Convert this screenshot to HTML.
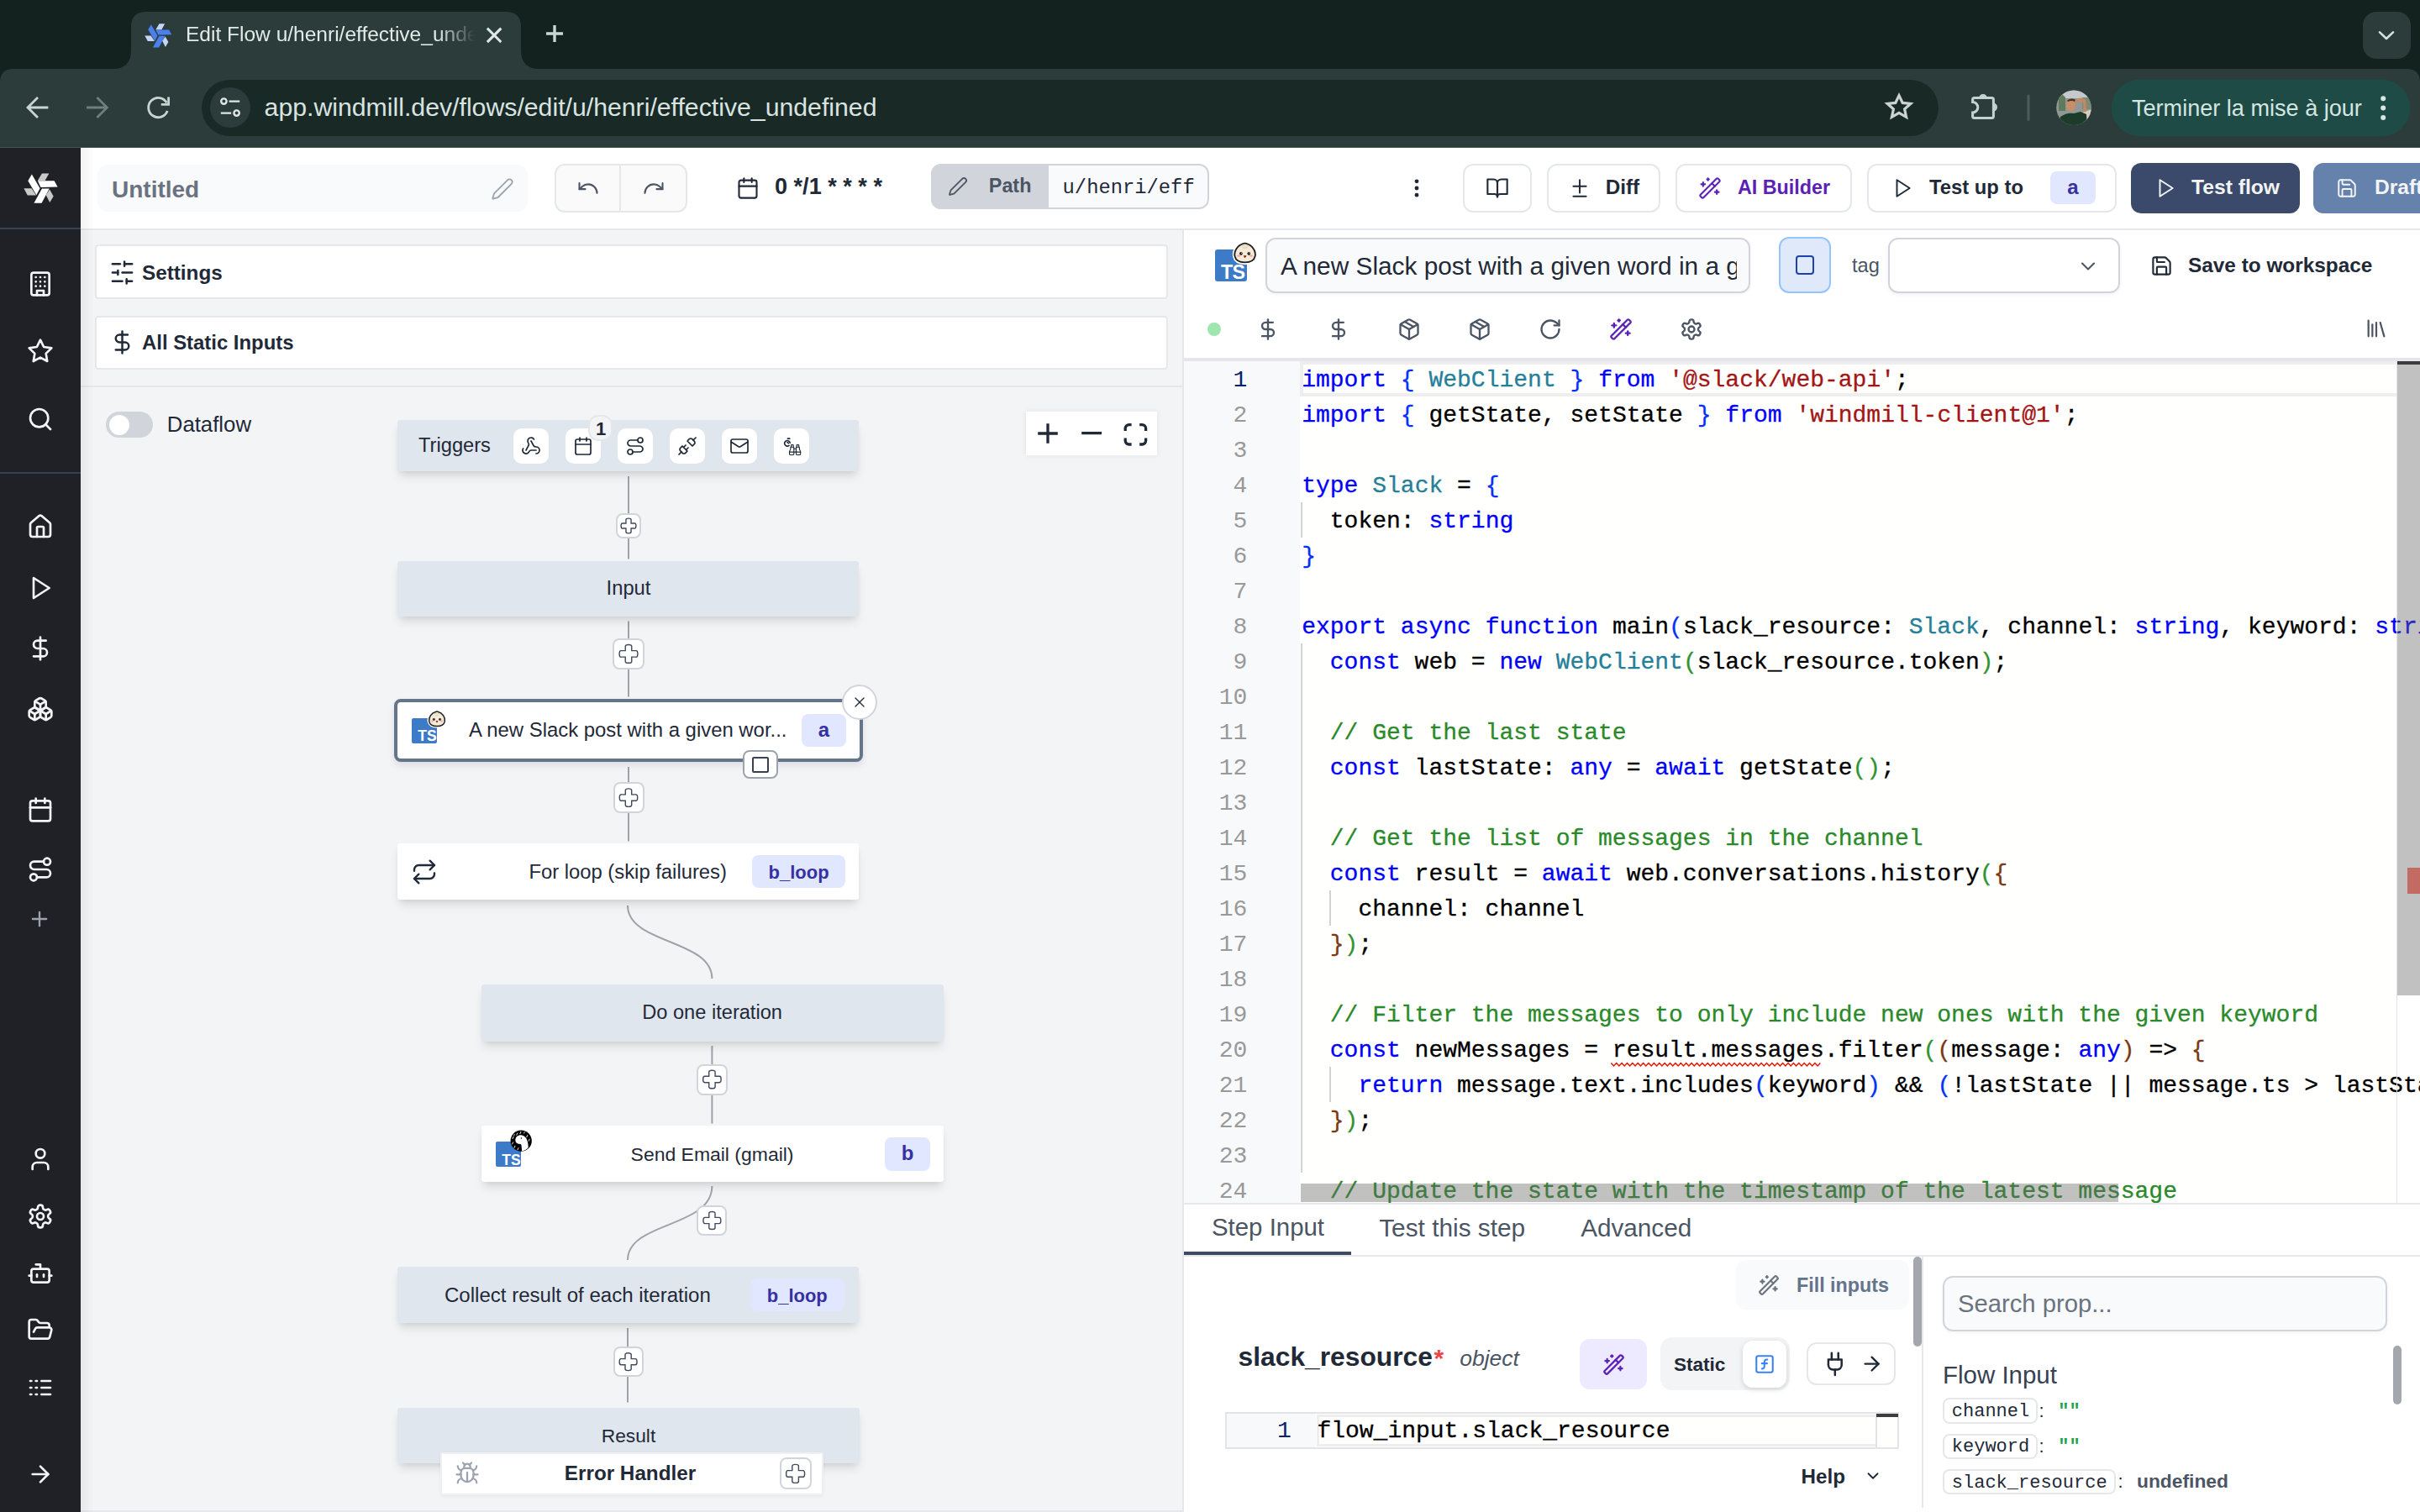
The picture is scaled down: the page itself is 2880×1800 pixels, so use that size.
<!DOCTYPE html>
<html><head><meta charset="utf-8"><style>
*{box-sizing:border-box;margin:0;padding:0}
html{zoom:2}
@media (max-width:2000px){html{zoom:1}}
body{width:1440px;height:900px;overflow:hidden;position:relative;font-family:"Liberation Sans",sans-serif;background:#fff;color:#1f2937}
.t{position:absolute;white-space:nowrap}
.b{position:absolute}
.s{position:absolute;display:block;overflow:visible}
</style></head><body>
<div class="b" style="left:0px;top:0px;width:1440px;height:88px;background:#13221f"></div>
<svg class="s" style="left:0;top:0" width="1440" height="88" viewBox="0 0 1440 88">
  <path d="M0 49 Q0 41 8 41 L67 41 Q78 41 78 30 L78 16 Q78 7 87 7 L301 7 Q310 7 310 16 L310 30 Q310 41 321 41 L1432 41 Q1440 41 1440 49 L1440 88 L0 88 Z" fill="#2c3c3a"/>
  <rect x="1406" y="7" width="28.5" height="28" rx="8" fill="#2c3c3a"/>
  <path d="M1416 19.2 L1420 23 L1424 19.2" stroke="#d6e2de" stroke-width="1.3" fill="none" stroke-linecap="round" stroke-linejoin="round"/>
  <path d="M290.5 17.4 L297.6 24.5 M297.6 17.4 L290.5 24.5" stroke="#dfe6e4" stroke-width="1.55" stroke-linecap="square"/>
  <path d="M330 15 V25 M325 20 H335" stroke="#c8d7d3" stroke-width="1.7"/>
  <path d="M28 64 H16.8 M22 58.5 L16.5 64 L22 69.5" stroke="#c8d6d2" stroke-width="1.4" fill="none" stroke-linecap="square"/>
  <path d="M52.2 64 H63.4 M58.2 58.5 L63.7 64 L58.2 69.5" stroke="#6f7f7b" stroke-width="1.4" fill="none" stroke-linecap="square"/>
  <path d="M99.2 61.2 A5.8 5.8 0 1 0 99.6 66" stroke="#c8d6d2" stroke-width="1.4" fill="none"/>
  <path d="M100.3 57.8 V62.2 H95.9" stroke="#c8d6d2" stroke-width="1.4" fill="none"/>
  <rect x="120" y="47.5" width="1033.5" height="33.5" rx="16.75" fill="#192926"/>
  <circle cx="137" cy="64" r="12" fill="#2c3c3a"/>
  <circle cx="133.2" cy="60.3" r="1.6" stroke="#dfe7e4" stroke-width="1.2" fill="none"/>
  <path d="M136.3 60.3 H142.6 M131.4 67.3 H137.6" stroke="#dfe7e4" stroke-width="1.2"/>
  <circle cx="140.8" cy="67.3" r="1.6" stroke="#dfe7e4" stroke-width="1.2" fill="none"/>
  <path d="M1130 56.8 L1132.1 61.2 L1136.9 61.7 L1133.3 64.9 L1134.3 69.7 L1130 67.2 L1125.7 69.7 L1126.7 64.9 L1123.1 61.7 L1127.9 61.2 Z" stroke="#cad3d0" stroke-width="1.6" fill="none" stroke-linejoin="miter"/>
  <path d="M1174.8 58.3 H1185.2 a1 1 0 0 1 1 1 V69.3 a1 1 0 0 1 -1 1 H1174.8 a1 1 0 0 1 -1 -1 V67 A3.1 3.1 0 0 0 1173.8 60.8 V59.3 a1 1 0 0 1 1 -1Z" stroke="#c3d3d0" stroke-width="1.5" fill="none"/><path d="M1177.5 58.5 A2.5 2.5 0 0 1 1182.5 58.5Z M1186 61.3 A2.5 2.5 0 0 1 1186 66.3Z" fill="#c3d3d0"/>
  <rect x="1206.2" y="56.2" width="1.6" height="15.8" rx="0.8" fill="#4b5957"/>
  <defs><linearGradient id="av" x1="0" y1="0" x2="0" y2="1"><stop offset="0" stop-color="#8b939a"/><stop offset="0.45" stop-color="#b98c6b"/><stop offset="0.6" stop-color="#1f4a2c"/><stop offset="1" stop-color="#23422a"/></linearGradient></defs>
  <clipPath id="avc"><circle cx="1234" cy="64.1" r="10.4"/></clipPath>
  <g clip-path="url(#avc)">
   <rect x="1223" y="53" width="22" height="22" fill="#8f9894"/>
   <rect x="1223" y="53" width="22" height="5.5" fill="#c4c9cc"/>
   <path d="M1225 58 L1227 56 L1229 58 L1229 66 L1225 66Z" fill="#5f7a5c"/>
   <rect x="1239" y="58" width="6" height="7" fill="#7d8a78"/>
   <path d="M1239 67 L1245 65 L1245 75 L1240 75Z" fill="#d8d0be"/>
   <path d="M1225 75 L1226 69.5 Q1230 66.8 1234 67.5 L1238 66.5 L1241.5 68 L1242 75Z" fill="#1d3b29"/>
   <ellipse cx="1232.3" cy="62.8" rx="2.9" ry="3.4" fill="#c58f6a"/>
   <path d="M1230.2 59.6 Q1232.5 58 1235 59.4 L1234.8 60.6 Q1232.5 59.5 1230.3 60.6Z" fill="#4a3324"/>
   <path d="M1234.5 60 Q1238 56.8 1241.2 59.5 L1241.4 66.5 L1239.8 66.8 L1239.6 61.2 Q1237.6 59.8 1235.6 61.6Z" fill="#c08a66"/>
  </g>
  <rect x="1256.4" y="47.3" width="177.8" height="33.7" rx="16.85" fill="#1f4b47"/>
  <circle cx="1418.1" cy="58.6" r="1.5" fill="#d6e8e2"/><circle cx="1418.1" cy="64.3" r="1.5" fill="#d6e8e2"/><circle cx="1418.1" cy="70" r="1.5" fill="#d6e8e2"/>
</svg>
<svg class="s" style="left:85.82px;top:13.78px" width="16.3" height="14.4" viewBox="400 260 1120 990"><g fill="#4a80ec"><path d="M860 515 L1400 515 L1510 712 L960 722Z M1000 765 L1240 765 L990 1240 L740 1240Z M670 300 L545 510 L820 975 L935 760Z"/></g><g fill="#c5d5f5"><path d="M860 505 L1000 270 L1230 270 L1100 505Z M1130 975 L1250 790 L1375 1020 L1255 1220Z M410 760 L660 760 L810 985 L530 985Z"/></g></svg>
<div class="t" style="left:110.5px;top:13.24px;font-size:12.26px;line-height:15.32px;color:#e3ebe8;width:172px;overflow:hidden;-webkit-mask-image:linear-gradient(90deg,#000 150px,transparent 172px)">Edit Flow u/henri/effective_undefined</div>
<div class="t" style="left:157.3px;top:54.31px;font-size:15.12px;line-height:18.9px;color:#d9e3e0;">app.windmill.dev/flows/edit/u/henri/effective_undefined</div>
<div class="b" style="left:0px;top:87.3px;width:1440px;height:0.7px;background:#4a504e"></div>
<div class="t" style="left:1268.5px;top:55.85px;font-size:13.54px;line-height:16.92px;color:#d3e6e0;">Terminer la mise à jour</div>
<div class="b" style="left:0px;top:88px;width:48px;height:812px;background:#1f2126"></div>
<svg class="s" style="left:13.76px;top:102.85px" width="20.48" height="18.11" viewBox="400 260 1120 990"><g fill="#ffffff"><path d="M860 515 L1400 515 L1510 712 L960 722Z M1000 765 L1240 765 L990 1240 L740 1240Z M670 300 L545 510 L820 975 L935 760Z"/></g><g fill="#c9c9c9"><path d="M860 505 L1000 270 L1230 270 L1100 505Z M1130 975 L1250 790 L1375 1020 L1255 1220Z M410 760 L660 760 L810 985 L530 985Z"/></g></svg>
<div class="b" style="left:0px;top:135.5px;width:48px;height:1px;background:#374151"></div>
<div class="b" style="left:0px;top:281px;width:48px;height:1px;background:#374151"></div>
<svg class="s" style="left:16px;top:161px" width="16" height="16" viewBox="0 0 24 24" fill="none" stroke="#f3f4f6" stroke-width="2" stroke-linecap="round" stroke-linejoin="round"><rect width="16" height="20" x="4" y="2" rx="2" ry="2"/><path d="M9 22v-4h6v4"/><path d="M8 6h.01M16 6h.01M12 6h.01M12 10h.01M12 14h.01M16 10h.01M16 14h.01M8 10h.01M8 14h.01"/></svg>
<svg class="s" style="left:16px;top:201px" width="16" height="16" viewBox="0 0 24 24" fill="none" stroke="#f3f4f6" stroke-width="2" stroke-linecap="round" stroke-linejoin="round"><polygon points="12 2 15.09 8.26 22 9.27 17 14.14 18.18 21.02 12 17.77 5.82 21.02 7 14.14 2 9.27 8.91 8.26 12 2"/></svg>
<svg class="s" style="left:16px;top:241.4px" width="16" height="16" viewBox="0 0 24 24" fill="none" stroke="#f3f4f6" stroke-width="2" stroke-linecap="round" stroke-linejoin="round"><circle cx="11" cy="11" r="8"/><path d="m21 21-4.3-4.3"/></svg>
<svg class="s" style="left:16px;top:305.5px" width="16" height="16" viewBox="0 0 24 24" fill="none" stroke="#f3f4f6" stroke-width="2" stroke-linecap="round" stroke-linejoin="round"><path d="M15 21v-8a1 1 0 0 0-1-1h-4a1 1 0 0 0-1 1v8"/><path d="M3 10a2 2 0 0 1 .709-1.528l7-5.999a2 2 0 0 1 2.582 0l7 5.999A2 2 0 0 1 21 10v9a2 2 0 0 1-2 2H5a2 2 0 0 1-2-2z"/></svg>
<svg class="s" style="left:16px;top:341.8px" width="16" height="16" viewBox="0 0 24 24" fill="none" stroke="#f3f4f6" stroke-width="2" stroke-linecap="round" stroke-linejoin="round"><polygon points="6 3 20 12 6 21 6 3"/></svg>
<svg class="s" style="left:16px;top:378.2px" width="16" height="16" viewBox="0 0 24 24" fill="none" stroke="#f3f4f6" stroke-width="2" stroke-linecap="round" stroke-linejoin="round"><line x1="12" x2="12" y1="2" y2="22"/><path d="M17 5H9.5a3.5 3.5 0 0 0 0 7h5a3.5 3.5 0 0 1 0 7H6"/></svg>
<svg class="s" style="left:16px;top:414px" width="16" height="16" viewBox="0 0 24 24" fill="none" stroke="#f3f4f6" stroke-width="2" stroke-linecap="round" stroke-linejoin="round"><path d="M2.97 12.92A2 2 0 0 0 2 14.63v3.24a2 2 0 0 0 .97 1.71l3 1.8a2 2 0 0 0 2.06 0L12 19v-5.5l-5-3-4.03 2.42Z"/><path d="m7 16.5-4.74-2.85"/><path d="m7 16.5 5-3"/><path d="M7 16.5v5.17"/><path d="M12 13.5V19l3.97 2.38a2 2 0 0 0 2.06 0l3-1.8a2 2 0 0 0 .97-1.71v-3.24a2 2 0 0 0-.97-1.71L17 10.5l-5 3Z"/><path d="m17 16.5-5-3"/><path d="m17 16.5 4.74-2.85"/><path d="M17 16.5v5.17"/><path d="M7.97 4.42A2 2 0 0 0 7 6.13v4.37l5 3 5-3V6.13a2 2 0 0 0-.97-1.71l-3-1.8a2 2 0 0 0-2.06 0l-3 1.8Z"/><path d="M12 8 7.26 5.15"/><path d="m12 8 4.74-2.85"/><path d="M12 13.5V8"/></svg>
<svg class="s" style="left:16px;top:474px" width="16" height="16" viewBox="0 0 24 24" fill="none" stroke="#f3f4f6" stroke-width="2" stroke-linecap="round" stroke-linejoin="round"><rect width="18" height="18" x="3" y="4" rx="2" ry="2"/><line x1="16" x2="16" y1="2" y2="6"/><line x1="8" x2="8" y1="2" y2="6"/><line x1="3" x2="21" y1="10" y2="10"/></svg>
<svg class="s" style="left:16px;top:509.7px" width="16" height="16" viewBox="0 0 24 24" fill="none" stroke="#f3f4f6" stroke-width="2" stroke-linecap="round" stroke-linejoin="round"><circle cx="6" cy="19" r="3"/><path d="M9 19h8.5a3.5 3.5 0 0 0 0-7h-11a3.5 3.5 0 0 1 0-7H15"/><circle cx="18" cy="5" r="3"/></svg>
<svg class="s" style="left:16.5px;top:539.8px" width="14" height="14" viewBox="0 0 24 24" fill="none" stroke="#9ca3af" stroke-width="2" stroke-linecap="round" stroke-linejoin="round"><path d="M5 12h14"/><path d="M12 5v14"/></svg>
<svg class="s" style="left:16px;top:682px" width="16" height="16" viewBox="0 0 24 24" fill="none" stroke="#f3f4f6" stroke-width="2" stroke-linecap="round" stroke-linejoin="round"><path d="M19 21v-2a4 4 0 0 0-4-4H9a4 4 0 0 0-4 4v2"/><circle cx="12" cy="7" r="4"/></svg>
<svg class="s" style="left:16px;top:716px" width="16" height="16" viewBox="0 0 24 24" fill="none" stroke="#f3f4f6" stroke-width="2" stroke-linecap="round" stroke-linejoin="round"><path d="M12.22 2h-.44a2 2 0 0 0-2 2v.18a2 2 0 0 1-1 1.73l-.43.25a2 2 0 0 1-2 0l-.15-.08a2 2 0 0 0-2.73.73l-.22.38a2 2 0 0 0 .73 2.73l.15.1a2 2 0 0 1 1 1.72v.51a2 2 0 0 1-1 1.74l-.15.09a2 2 0 0 0-.73 2.73l.22.38a2 2 0 0 0 2.73.73l.15-.08a2 2 0 0 1 2 0l.43.25a2 2 0 0 1 1 1.73V20a2 2 0 0 0 2 2h.44a2 2 0 0 0 2-2v-.18a2 2 0 0 1 1-1.73l.43-.25a2 2 0 0 1 2 0l.15.08a2 2 0 0 0 2.73-.73l.22-.39a2 2 0 0 0-.73-2.73l-.15-.08a2 2 0 0 1-1-1.74v-.5a2 2 0 0 1 1-1.74l.15-.09a2 2 0 0 0 .73-2.73l-.22-.38a2 2 0 0 0-2.73-.73l-.15.08a2 2 0 0 1-2 0l-.43-.25a2 2 0 0 1-1-1.73V4a2 2 0 0 0-2-2z"/><circle cx="12" cy="12" r="3"/></svg>
<svg class="s" style="left:16px;top:749.8px" width="16" height="16" viewBox="0 0 24 24" fill="none" stroke="#f3f4f6" stroke-width="2" stroke-linecap="round" stroke-linejoin="round"><path d="M12 8V4H8"/><rect width="16" height="12" x="4" y="8" rx="2"/><path d="M2 14h2"/><path d="M20 14h2"/><path d="M15 13v2"/><path d="M9 13v2"/></svg>
<svg class="s" style="left:16px;top:783.6px" width="16" height="16" viewBox="0 0 24 24" fill="none" stroke="#f3f4f6" stroke-width="2" stroke-linecap="round" stroke-linejoin="round"><path d="m6 14 1.5-2.9A2 2 0 0 1 9.24 10H20a2 2 0 0 1 1.94 2.5l-1.54 6a2 2 0 0 1-1.95 1.5H4a2 2 0 0 1-2-2V5a2 2 0 0 1 2-2h3.9a2 2 0 0 1 1.69.9l.81 1.2a2 2 0 0 0 1.67.9H18a2 2 0 0 1 2 2v2"/></svg>
<svg class="s" style="left:16px;top:817.9px" width="16" height="16" viewBox="0 0 24 24" fill="none" stroke="#f3f4f6" stroke-width="2" stroke-linecap="round" stroke-linejoin="round"><path d="M13 12h8"/><path d="M13 18h8"/><path d="M13 6h8"/><path d="M3 12h1"/><path d="M3 18h1"/><path d="M3 6h1"/><path d="M8 12h1"/><path d="M8 18h1"/><path d="M8 6h1"/></svg>
<svg class="s" style="left:16px;top:869.4px" width="16" height="16" viewBox="0 0 24 24" fill="none" stroke="#f3f4f6" stroke-width="2" stroke-linecap="round" stroke-linejoin="round"><path d="M5 12h14"/><path d="m12 5 7 7-7 7"/></svg>
<div class="b" style="left:48px;top:88px;width:1392px;height:49px;background:#fff;border-bottom:1px solid #e5e7eb"></div>
<div class="b" style="left:58px;top:98px;width:256px;height:28px;background:#f9fafb;border-radius:6px"></div>
<div class="t" style="left:66.5px;top:103.9px;font-size:14px;line-height:17.5px;color:#6b7280;font-weight:bold;">Untitled</div>
<svg class="s" style="left:292px;top:105.5px" width="14" height="14" viewBox="0 0 24 24" fill="none" stroke="#9ca3af" stroke-width="1.6" stroke-linecap="round" stroke-linejoin="round"><path d="M21.174 6.812a1 1 0 0 0-3.986-3.987L3.842 16.174a2 2 0 0 0-.5.83l-1.321 4.352a.5.5 0 0 0 .623.622l4.353-1.32a2 2 0 0 0 .83-.497z"/></svg>
<div class="b" style="left:330px;top:97.3px;width:79px;height:29.3px;border:1px solid #e5e7eb;border-radius:6px;background:#fafafa"></div>
<div class="b" style="left:368.5px;top:97.5px;width:1px;height:29px;background:#e5e7eb"></div>
<svg class="s" style="left:343px;top:105px" width="14" height="14" viewBox="0 0 24 24" fill="none" stroke="#4b5563" stroke-width="1.8" stroke-linecap="round" stroke-linejoin="round"><path d="M3 7v6h6"/><path d="M21 17a9 9 0 0 0-9-9 9 9 0 0 0-6 2.3L3 13"/></svg>
<svg class="s" style="left:382px;top:105px" width="14" height="14" viewBox="0 0 24 24" fill="none" stroke="#4b5563" stroke-width="1.8" stroke-linecap="round" stroke-linejoin="round"><path d="M21 7v6h-6"/><path d="M3 17a9 9 0 0 1 9-9 9 9 0 0 1 6 2.3l3 2.7"/></svg>
<svg class="s" style="left:438px;top:105px" width="14" height="14" viewBox="0 0 24 24" fill="none" stroke="#1f2937" stroke-width="1.8" stroke-linecap="round" stroke-linejoin="round"><rect width="18" height="18" x="3" y="4" rx="2" ry="2"/><line x1="16" x2="16" y1="2" y2="6"/><line x1="8" x2="8" y1="2" y2="6"/><line x1="3" x2="21" y1="10" y2="10"/></svg>
<div class="t" style="left:461px;top:102.65px;font-size:13.54px;line-height:16.92px;color:#1f2937;font-weight:bold;">0 */1 * * * *</div>
<div class="b" style="left:554px;top:97.5px;width:165.4px;height:27.2px;border:1px solid #d1d5db;border-radius:6px;background:#f9fafb;overflow:hidden"></div>
<div class="b" style="left:554px;top:97.5px;width:70px;height:27.2px;background:#d1d5db;border-radius:6px 0 0 6px"></div>
<svg class="s" style="left:564px;top:105px" width="12" height="12" viewBox="0 0 24 24" fill="none" stroke="#4b5563" stroke-width="1.8" stroke-linecap="round" stroke-linejoin="round"><path d="M21.174 6.812a1 1 0 0 0-3.986-3.987L3.842 16.174a2 2 0 0 0-.5.83l-1.321 4.352a.5.5 0 0 0 .623.622l4.353-1.32a2 2 0 0 0 .83-.497z"/></svg>
<div class="t" style="left:588.4px;top:103.55px;font-size:11.68px;line-height:14.6px;color:#4b5563;font-weight:bold;">Path</div>
<div class="t" style="left:632.3px;top:104.29px;font-size:11.9px;line-height:14.88px;color:#1f2937;font-family:'Liberation Mono',monospace;">u/henri/eff</div>
<svg class="s" style="left:836px;top:105px" width="14" height="14" viewBox="0 0 24 24" fill="none" stroke="#1f2937" stroke-width="2.2" stroke-linecap="round" stroke-linejoin="round"><circle cx="12" cy="12" r="1"/><circle cx="12" cy="5" r="1"/><circle cx="12" cy="19" r="1"/></svg>
<div class="b" style="left:870.6px;top:97.5px;width:41px;height:29px;border:1px solid #e5e7eb;border-radius:6px;background:#fff"></div>
<svg class="s" style="left:884px;top:105px" width="14" height="14" viewBox="0 0 24 24" fill="none" stroke="#1f2937" stroke-width="1.8" stroke-linecap="round" stroke-linejoin="round"><path d="M2 3h6a4 4 0 0 1 4 4v14a3 3 0 0 0-3-3H2z"/><path d="M22 3h-6a4 4 0 0 0-4 4v14a3 3 0 0 1 3-3h7z"/></svg>
<div class="b" style="left:920.6px;top:97.5px;width:67.4px;height:29px;border:1px solid #e5e7eb;border-radius:6px;background:#fff"></div>
<svg class="s" style="left:933.5px;top:105.5px" width="13" height="13" viewBox="0 0 24 24" fill="none" stroke="#1f2937" stroke-width="1.8" stroke-linecap="round" stroke-linejoin="round"><path d="M12 3v14"/><path d="M5 10h14"/><path d="M5 21h14"/></svg>
<div class="t" style="left:955.4px;top:104.03px;font-size:12.12px;line-height:15.15px;color:#1f2937;font-weight:bold;">Diff</div>
<div class="b" style="left:997px;top:97.5px;width:105px;height:29px;border:1px solid #e5e7eb;border-radius:6px;background:#fff"></div>
<svg class="s" style="left:1010.5px;top:105px" width="14" height="14" viewBox="0 0 24 24" fill="none" stroke="#5b21b6" stroke-width="1.8" stroke-linecap="round" stroke-linejoin="round"><path d="m21.64 3.64-1.28-1.28a1.21 1.21 0 0 0-1.72 0L2.36 18.64a1.21 1.21 0 0 0 0 1.72l1.28 1.28a1.2 1.2 0 0 0 1.72 0L21.64 5.36a1.2 1.2 0 0 0 0-1.72"/><path d="m14 7 3 3"/><path d="M5 6v4"/><path d="M19 14v4"/><path d="M10 2v2"/><path d="M7 8H3"/><path d="M21 16h-4"/><path d="M11 3H9"/></svg>
<div class="t" style="left:1034px;top:104.48px;font-size:11.65px;line-height:14.56px;color:#5b21b6;font-weight:bold;">AI Builder</div>
<div class="b" style="left:1111px;top:97.5px;width:148.6px;height:29px;border:1px solid #e5e7eb;border-radius:6px;background:#fff"></div>
<svg class="s" style="left:1125.5px;top:105.5px" width="13" height="13" viewBox="0 0 24 24" fill="none" stroke="#1f2937" stroke-width="1.8" stroke-linecap="round" stroke-linejoin="round"><polygon points="6 3 20 12 6 21 6 3"/></svg>
<div class="t" style="left:1148px;top:104.23px;font-size:11.91px;line-height:14.89px;color:#1f2937;font-weight:bold;">Test up to</div>
<div class="b" style="left:1220px;top:102px;width:27px;height:19.7px;background:#e0e7ff;border-radius:4px"></div>
<div class="t" style="left:1033.5px;top:104.14px;font-size:12px;line-height:15px;color:#3730a3;font-weight:bold;width:400px;text-align:center;">a</div>
<div class="b" style="left:1268px;top:97px;width:100.4px;height:29.8px;background:#3b4a6b;border-radius:6px"></div>
<svg class="s" style="left:1282px;top:105.5px" width="13" height="13" viewBox="0 0 24 24" fill="none" stroke="#f3f4f6" stroke-width="1.8" stroke-linecap="round" stroke-linejoin="round"><polygon points="6 3 20 12 6 21 6 3"/></svg>
<div class="t" style="left:1304px;top:103.82px;font-size:12.33px;line-height:15.41px;color:#f3f4f6;font-weight:bold;">Test flow</div>
<div class="b" style="left:1376.6px;top:97px;width:80px;height:29.8px;background:#6582ad;border-radius:6px"></div>
<svg class="s" style="left:1390.1px;top:105.5px" width="13" height="13" viewBox="0 0 24 24" fill="none" stroke="#f3f4f6" stroke-width="1.8" stroke-linecap="round" stroke-linejoin="round"><path d="M15.2 3a2 2 0 0 1 1.4.6l3.8 3.8a2 2 0 0 1 .6 1.4V19a2 2 0 0 1-2 2H5a2 2 0 0 1-2-2V5a2 2 0 0 1 2-2z"/><path d="M17 21v-7a1 1 0 0 0-1-1H8a1 1 0 0 0-1 1v7"/><path d="M7 3v4a1 1 0 0 0 1 1h7"/></svg>
<div class="t" style="left:1413px;top:103.85px;font-size:12.3px;line-height:15.38px;color:#f3f4f6;font-weight:bold;">Draft</div>
<div class="b" style="left:48px;top:137px;width:655.4px;height:763px;background:#f3f4f6"></div>
<div class="b" style="left:703.4px;top:137px;width:1px;height:763px;background:#e5e7eb"></div>
<div class="b" style="left:56.3px;top:145.6px;width:638.6px;height:32.5px;background:#fff;border:1px solid #e5e7eb;border-radius:2px"></div>
<svg class="s" style="left:65.05px;top:154.25px" width="15.5" height="15.5" viewBox="0 0 24 24" fill="none" stroke="#1f2937" stroke-width="1.9" stroke-linecap="round" stroke-linejoin="round"><line x1="21" x2="14" y1="4" y2="4"/><line x1="10" x2="3" y1="4" y2="4"/><line x1="21" x2="12" y1="12" y2="12"/><line x1="8" x2="3" y1="12" y2="12"/><line x1="21" x2="16" y1="20" y2="20"/><line x1="12" x2="3" y1="20" y2="20"/><line x1="14" x2="14" y1="2" y2="6"/><line x1="8" x2="8" y1="10" y2="14"/><line x1="16" x2="16" y1="18" y2="22"/></svg>
<div class="t" style="left:84.5px;top:154.8px;font-size:12.14px;line-height:15.18px;color:#1f2937;font-weight:bold;">Settings</div>
<div class="b" style="left:56.3px;top:187.8px;width:638.6px;height:32.2px;background:#fff;border:1px solid #e5e7eb;border-radius:2px"></div>
<svg class="s" style="left:64.85px;top:196.05px" width="15.5" height="15.5" viewBox="0 0 24 24" fill="none" stroke="#1f2937" stroke-width="1.9" stroke-linecap="round" stroke-linejoin="round"><line x1="12" x2="12" y1="2" y2="22"/><path d="M17 5H9.5a3.5 3.5 0 0 0 0 7h5a3.5 3.5 0 0 1 0 7H6"/></svg>
<div class="t" style="left:84.5px;top:196.59px;font-size:11.95px;line-height:14.94px;color:#1f2937;font-weight:bold;">All Static Inputs</div>
<div class="b" style="left:48px;top:229.3px;width:655.4px;height:1px;background:#e5e7eb"></div>
<div class="b" style="left:63px;top:245px;width:28px;height:15.6px;background:#d1d5db;border-radius:8px"></div>
<div class="b" style="left:65px;top:246.8px;width:12.2px;height:12.2px;background:#fff;border-radius:50%"></div>
<div class="t" style="left:99.4px;top:244.49px;font-size:12.88px;line-height:16.1px;color:#1f2937;">Dataflow</div>
<div class="b" style="left:610.5px;top:245px;width:77.9px;height:25.9px;background:#fff;box-shadow:0 0 3px rgba(0,0,0,0.08)"></div>
<svg class="s" style="left:610.5px;top:245px;" width="77.9" height="25.9" viewBox="0 0 77.9 25.9"><g stroke="#1f2937" stroke-width="1.65" fill="none"><path d="M7.1 13 H18.9 M13 7.1 V18.9"/><path d="M33.1 12.8 H45"/><path d="M59.1 11.5 V10 a2.2 2.2 0 0 1 2.2 -2.2 H62.8 M67.6 7.8 H69.1 a2.2 2.2 0 0 1 2.2 2.2 V11.5 M71.3 15.8 V17.3 a2.2 2.2 0 0 1 -2.2 2.2 H67.6 M62.8 19.5 H61.3 a2.2 2.2 0 0 1 -2.2 -2.2 V15.8"/></g></svg>
<svg class="s" style="left:0px;top:0px;left:0;top:0" width="1440" height="900" viewBox="0 0 1440 900"><path d="M374 283.5 V332.7" stroke="#a1a1aa" stroke-width="1" fill="none"/><path d="M374 369.7 V414.8" stroke="#a1a1aa" stroke-width="1" fill="none"/><path d="M374 456.5 V500.7" stroke="#a1a1aa" stroke-width="1" fill="none"/><path d="M373.5 539 C373.5 562 423.7 559 423.7 582.5" stroke="#a1a1aa" stroke-width="1" fill="none"/><path d="M423.7 622.5 V668.8" stroke="#a1a1aa" stroke-width="1" fill="none"/><path d="M423.7 706 C423.7 731 373.5 727 373.5 750" stroke="#a1a1aa" stroke-width="1" fill="none"/><path d="M373.5 790.5 V834.7" stroke="#a1a1aa" stroke-width="1" fill="none"/></svg>
<div class="b" style="left:236.5px;top:250px;width:274.5px;height:30.7px;background:#e0e6ee;border-radius:1.5px;box-shadow:0 4px 6px -1px rgba(0,0,0,0.1),0 2px 4px -2px rgba(0,0,0,0.1)"></div>
<div class="t" style="left:249px;top:258.1px;font-size:11.84px;line-height:14.8px;color:#1f2937;">Triggers</div>
<div class="b" style="left:305.7px;top:255px;width:20.8px;height:21px;background:#fff;border-radius:5px"></div>
<svg class="s" style="left:310.1px;top:259.5px" width="12" height="12" viewBox="0 0 24 24" fill="none" stroke="#1f2937" stroke-width="1.7" stroke-linecap="round" stroke-linejoin="round"><path d="M18 16.98h-5.99c-1.1 0-1.95.94-2.48 1.9A4 4 0 0 1 2 17c.01-.7.2-1.4.57-2"/><path d="m6 17 3.13-5.78c.53-.97.1-2.18-.5-3.1a4 4 0 1 1 6.89-4.06"/><path d="m12 6 3.13 5.73C15.66 12.7 16.9 13 18 13a4 4 0 0 1 0 8"/></svg>
<div class="b" style="left:336.7px;top:255px;width:20.8px;height:21px;background:#fff;border-radius:5px"></div>
<svg class="s" style="left:341.1px;top:259.5px" width="12" height="12" viewBox="0 0 24 24" fill="none" stroke="#1f2937" stroke-width="1.7" stroke-linecap="round" stroke-linejoin="round"><rect width="18" height="18" x="3" y="4" rx="2" ry="2"/><line x1="16" x2="16" y1="2" y2="6"/><line x1="8" x2="8" y1="2" y2="6"/><line x1="3" x2="21" y1="10" y2="10"/></svg>
<div class="b" style="left:367.7px;top:255px;width:20.8px;height:21px;background:#fff;border-radius:5px"></div>
<svg class="s" style="left:372.1px;top:259.5px" width="12" height="12" viewBox="0 0 24 24" fill="none" stroke="#1f2937" stroke-width="1.7" stroke-linecap="round" stroke-linejoin="round"><circle cx="6" cy="19" r="3"/><path d="M9 19h8.5a3.5 3.5 0 0 0 0-7h-11a3.5 3.5 0 0 1 0-7H15"/><circle cx="18" cy="5" r="3"/></svg>
<div class="b" style="left:398.7px;top:255px;width:20.8px;height:21px;background:#fff;border-radius:5px"></div>
<svg class="s" style="left:403.1px;top:259.5px" width="12" height="12" viewBox="0 0 24 24" fill="none" stroke="#1f2937" stroke-width="1.7" stroke-linecap="round" stroke-linejoin="round"><path d="m19 5 3-3"/><path d="m2 22 3-3"/><path d="M6.3 20.3a2.4 2.4 0 0 0 3.4 0L12 18l-6-6-2.3 2.3a2.4 2.4 0 0 0 0 3.4Z"/><path d="M7.5 13.5 10 11"/><path d="M10.5 16.5 13 14"/><path d="m12 6 6 6 2.3-2.3a2.4 2.4 0 0 0 0-3.4l-2.6-2.6a2.4 2.4 0 0 0-3.4 0Z"/></svg>
<div class="b" style="left:429.7px;top:255px;width:20.8px;height:21px;background:#fff;border-radius:5px"></div>
<svg class="s" style="left:434.1px;top:259.5px" width="12" height="12" viewBox="0 0 24 24" fill="none" stroke="#1f2937" stroke-width="1.7" stroke-linecap="round" stroke-linejoin="round"><rect width="20" height="16" x="2" y="4" rx="2"/><path d="m22 7-8.97 5.7a1.94 1.94 0 0 1-2.06 0L2 7"/></svg>
<div class="b" style="left:460.7px;top:255px;width:20.8px;height:21px;background:#fff;border-radius:5px"></div>
<svg class="s" style="left:465.1px;top:259.5px" width="12" height="12" viewBox="0 0 24 24" fill="none" stroke="#1f2937" stroke-width="1.7" stroke-linecap="round" stroke-linejoin="round"><path d="M7.5 3.2h2.2"/><path d="M10.2 8.2a3.3 3.3 0 1 0 -1.2 3.2"/><path d="M8.4 8.6 7 7.6" /><g transform="translate(8.2 8.6) scale(0.66)"><path d="M10 10h4"/><path d="M19 7V4a1 1 0 0 0-1-1h-2a1 1 0 0 0-1 1v3"/><path d="M20 21a2 2 0 0 0 2-2v-3.851c0-1.39-2-2.962-2-4.829V8a1 1 0 0 0-1-1h-4a1 1 0 0 0-1 1v11a2 2 0 0 0 2 2z"/><path d="M 22 16 L 2 16"/><path d="M4 21a2 2 0 0 1-2-2v-3.851c0-1.39 2-2.962 2-4.829V8a1 1 0 0 1 1-1h4a1 1 0 0 1 1 1v11a2 2 0 0 1-2 2z"/><path d="M9 7V4a1 1 0 0 0-1-1H6a1 1 0 0 0-1 1v3"/></g></svg>
<div class="b" style="left:350px;top:247px;width:14.5px;height:15.3px;background:#f3f4f6;border:1px solid #e5e7eb;border-radius:6px"></div>
<div class="t" style="left:157.5px;top:248.51px;font-size:11px;line-height:13.75px;color:#1f2937;font-weight:bold;width:400px;text-align:center;">1</div>
<div class="b" style="left:236.5px;top:334px;width:274.5px;height:33px;background:#e0e6ee;border-radius:1.5px;box-shadow:0 4px 6px -1px rgba(0,0,0,0.1),0 2px 4px -2px rgba(0,0,0,0.1)"></div>
<div class="t" style="left:174px;top:343.07px;font-size:11.87px;line-height:14.84px;color:#1f2937;width:400px;text-align:center;">Input</div>
<div class="b" style="left:234.6px;top:416px;width:278.7px;height:37.6px;background:#fff;border:2.1px solid #64748b;border-radius:4px;box-shadow:0 2px 4px rgba(15,23,42,0.1)"></div>
<div class="b" style="left:245px;top:427.4px;width:15px;height:15px;background:#3d7bc8;border-radius:1px"></div><div class="t" style="left:248.6px;top:433.19px;font-size:8.76px;line-height:10.95px;color:#fff;font-weight:bold;">TS</div>
<svg class="s" style="left:253.9px;top:422.25px" width="12" height="10.5" viewBox="0 0 16 14"><path d="M1.8 9.2 C1.2 6 3.6 2.4 7.3 1.5 Q8 1.2 8.7 1.5 C12.4 2.4 14.8 6 14.2 9.2 C13.6 12.2 11 13 8 13 C5 13 2.4 12.2 1.8 9.2Z" fill="#fff" stroke="#fff" stroke-width="2.6" stroke-linejoin="round"/><path d="M1.8 9.2 C1.2 6 3.6 2.4 7.3 1.5 Q8 1.2 8.7 1.5 C12.4 2.4 14.8 6 14.2 9.2 C13.6 12.2 11 13 8 13 C5 13 2.4 12.2 1.8 9.2Z" fill="#f4ead6" stroke="#1f1f1f" stroke-width="0.95" stroke-linejoin="round"/><path d="M6 3.3 Q7 2.6 8 3 M8.4 2.9 Q9.5 2.7 10.3 3.4 M6.8 4.3 Q8 3.6 9.4 4.2" stroke="#c9b99a" stroke-width="0.35" fill="none"/><circle cx="5.6" cy="7.6" r="0.95" fill="#111"/><circle cx="10.4" cy="7.6" r="0.95" fill="#111"/><circle cx="5.85" cy="7.3" r="0.3" fill="#fff"/><circle cx="10.65" cy="7.3" r="0.3" fill="#fff"/><path d="M7.1 8.7 Q8 8.9 8.9 8.7 Q8.6 10.2 8 10.2 Q7.4 10.2 7.1 8.7Z" fill="#8b1a1a"/><ellipse cx="4.2" cy="9" rx="1.05" ry="0.65" fill="#f2a7b5"/><ellipse cx="11.8" cy="9" rx="1.05" ry="0.65" fill="#f2a7b5"/></svg>
<div class="t" style="left:279px;top:427.19px;font-size:11.95px;line-height:14.94px;color:#1f2937;">A new Slack post with a given wor...</div>
<div class="b" style="left:477px;top:425.1px;width:26.4px;height:19.6px;background:#e0e7ff;border-radius:4px"></div>
<div class="t" style="left:290.2px;top:427.14px;font-size:12px;line-height:15px;color:#3730a3;font-weight:bold;width:400px;text-align:center;">a</div>
<div class="b" style="left:500.9px;top:407.5px;width:21px;height:21px;background:#fff;border:1px solid #d1d5db;border-radius:50%"></div>
<svg class="s" style="left:506.4px;top:413px" width="10" height="10" viewBox="0 0 24 24" fill="none" stroke="#1f2937" stroke-width="1.6" stroke-linecap="round" stroke-linejoin="round"><path d="M18 6 6 18"/><path d="m6 6 12 12"/></svg>
<div class="b" style="left:442px;top:446.6px;width:21px;height:17px;background:#fff;border:1px solid #9ca3af;border-radius:4px"></div>
<div class="b" style="left:447.6px;top:450.3px;width:9.9px;height:9.5px;border:1.3px solid #374151;border-radius:1px"></div>
<div class="b" style="left:236.4px;top:502px;width:274.6px;height:33.7px;background:#fff;border-radius:1.5px;box-shadow:0 4px 6px -1px rgba(0,0,0,0.1),0 2px 4px -2px rgba(0,0,0,0.1)"></div>
<svg class="s" style="left:244.3px;top:511px" width="16" height="16" viewBox="0 0 24 24" fill="none" stroke="#1f2937" stroke-width="1.8" stroke-linecap="round" stroke-linejoin="round"><path d="m17 2 4 4-4 4"/><path d="M3 11v-1a4 4 0 0 1 4-4h14"/><path d="m7 22-4-4 4-4"/><path d="M21 13v1a4 4 0 0 1-4 4H3"/></svg>
<div class="t" style="left:314.7px;top:511.73px;font-size:11.91px;line-height:14.89px;color:#1f2937;">For loop (skip failures)</div>
<div class="b" style="left:447.5px;top:509px;width:55.5px;height:19.5px;background:#e0e7ff;border-radius:4px"></div>
<div class="t" style="left:275.3px;top:512.63px;font-size:10.98px;line-height:13.73px;color:#3730a3;font-weight:bold;width:400px;text-align:center;">b_loop</div>
<div class="b" style="left:286.4px;top:586px;width:274.9px;height:34px;background:#e0e6ee;border-radius:1.5px;box-shadow:0 4px 6px -1px rgba(0,0,0,0.1),0 2px 4px -2px rgba(0,0,0,0.1)"></div>
<div class="t" style="left:223.8px;top:595.63px;font-size:11.81px;line-height:14.76px;color:#1f2937;width:400px;text-align:center;">Do one iteration</div>
<div class="b" style="left:286.6px;top:670.2px;width:274.8px;height:33.5px;background:#fff;border-radius:1.5px;box-shadow:0 4px 6px -1px rgba(0,0,0,0.1),0 2px 4px -2px rgba(0,0,0,0.1)"></div>
<div class="b" style="left:295px;top:679.5px;width:15px;height:15px;background:#3d7bc8;border-radius:1px"></div><div class="t" style="left:298.6px;top:685.29px;font-size:8.76px;line-height:10.95px;color:#fff;font-weight:bold;">TS</div>
<svg class="s" style="left:303.3px;top:672.6px;" width="13.2" height="13.2" viewBox="0 0 13.2 13.2"><g transform="translate(6.6 6.6)"><circle r="6.3" fill="#000"/><path d="M-3.4 -0.2 C-3.6 -2.6 -1.4 -3.6 0.3 -3.4 C2.4 -3.1 3.6 -1.2 4.0 1.2 L4.3 3.9 C3.2 5.3 1.8 5.9 0.5 6.1 L0.1 2.3 C-0.3 1.9 -1 1.9 -1.5 1.8 C-2.6 1.6 -3.3 0.9 -3.4 -0.2Z" fill="#fff"/><circle cx="0.1" cy="-1.6" r="0.38" fill="#000"/><g stroke="#fff" stroke-width="0.45" stroke-linecap="round"><path d="M-2.2 -4.6 l-0.5 1.1 M-0.2 -5.4 l-0.4 1.1 M2.0 -5.2 l-0.3 0.6 M3.8 -3.4 l-0.5 1.1 M5.0 -1.0 l-0.5 1.1 M-4.6 -2.4 l-0.5 1.1 M-4.8 0.8 l-0.5 1.1 M-3.6 3.0 l-0.5 1.1 M-1.6 4.2 l-0.5 1.1 M-4.0 -3.8 l-0.3 0.7"/></g></g></svg>
<div class="t" style="left:375.3px;top:679.75px;font-size:11.48px;line-height:14.35px;color:#1f2937;">Send Email (gmail)</div>
<div class="b" style="left:526.6px;top:677.1px;width:26.9px;height:19.7px;background:#e0e7ff;border-radius:4px"></div>
<div class="t" style="left:340px;top:679.24px;font-size:12px;line-height:15px;color:#3730a3;font-weight:bold;width:400px;text-align:center;">b</div>
<div class="b" style="left:236.4px;top:754px;width:274.6px;height:33.6px;background:#e0e6ee;border-radius:1.5px;box-shadow:0 4px 6px -1px rgba(0,0,0,0.1),0 2px 4px -2px rgba(0,0,0,0.1)"></div>
<div class="t" style="left:264.5px;top:763.41px;font-size:12.03px;line-height:15.04px;color:#1f2937;">Collect result of each iteration</div>
<div class="b" style="left:446.5px;top:761px;width:55.8px;height:19.4px;background:#e0e7ff;border-radius:4px"></div>
<div class="t" style="left:274.4px;top:764.43px;font-size:10.98px;line-height:13.73px;color:#3730a3;font-weight:bold;width:400px;text-align:center;">b_loop</div>
<div class="b" style="left:236.6px;top:838.2px;width:274.8px;height:32.8px;background:#e0e6ee;border-radius:1.5px;box-shadow:0 4px 6px -1px rgba(0,0,0,0.1),0 2px 4px -2px rgba(0,0,0,0.1)"></div>
<div class="t" style="left:174px;top:847.46px;font-size:11.36px;line-height:14.2px;color:#1f2937;width:400px;text-align:center;">Result</div>
<div class="b" style="left:366.35px;top:305.35px;width:15.3px;height:15.3px;background:#fff;border:1px solid #d1d5db;border-radius:4px"></div>
<div class="b" style="left:364.6px;top:379.8px;width:18.8px;height:18.8px;background:#fff;border:1px solid #d1d5db;border-radius:4px"></div>
<div class="b" style="left:364.75px;top:465.55px;width:18.5px;height:18.5px;background:#fff;border:1px solid #d1d5db;border-radius:4px"></div>
<div class="b" style="left:414.45px;top:633.25px;width:18.5px;height:18.5px;background:#fff;border:1px solid #d1d5db;border-radius:4px"></div>
<div class="b" style="left:414.7px;top:717.5px;width:18px;height:18px;background:#fff;border:1px solid #d1d5db;border-radius:4px"></div>
<div class="b" style="left:364.8px;top:801.6px;width:18px;height:18px;background:#fff;border:1px solid #d1d5db;border-radius:4px"></div>
<div class="b" style="left:261.8px;top:864.5px;width:228.2px;height:25.7px;background:#fff;border:1px solid #eef0f3;border-radius:1px;box-shadow:0 1px 2px rgba(0,0,0,0.05)"></div>
<svg class="s" style="left:270.4px;top:869.5px" width="15" height="15" viewBox="0 0 24 24" fill="none" stroke="#9ca3af" stroke-width="1.8" stroke-linecap="round" stroke-linejoin="round"><path d="m8 2 1.88 1.88"/><path d="M14.12 3.88 16 2"/><path d="M9 7.13v-1a3.003 3.003 0 1 1 6 0v1"/><path d="M12 20c-3.3 0-6-2.7-6-6v-3a4 4 0 0 1 4-4h4a4 4 0 0 1 4 4v3c0 3.3-2.7 6-6 6"/><path d="M12 20v-9"/><path d="M6.53 9C4.6 8.8 3 7.1 3 5"/><path d="M6 13H2"/><path d="M3 21c0-2.1 1.7-3.9 3.8-4"/><path d="M20.97 5c0 2.1-1.6 3.8-3.5 4"/><path d="M22 13h-4"/><path d="M17.2 17c2.1.1 3.8 1.9 3.8 4"/></svg>
<div class="t" style="left:175px;top:869.72px;font-size:12.13px;line-height:15.16px;color:#1f2937;font-weight:bold;width:400px;text-align:center;">Error Handler</div>
<div class="b" style="left:463.8px;top:867.7px;width:19px;height:19px;background:#fff;border:1px solid #d1d5db;border-radius:4px"></div>
<svg class="s" style="left:0px;top:0px;left:0;top:0" width="1440" height="900" viewBox="0 0 1440 900"><path d="M372.47 309.328 Q372.47 308.563 374 308.563 Q375.53 308.563 375.53 309.328 V311.47 H377.672 Q378.437 311.47 378.437 313 Q378.437 314.53 377.672 314.53 H375.53 V316.672 Q375.53 317.437 374 317.437 Q372.47 317.437 372.47 316.672 V314.53 H370.328 Q369.563 314.53 369.563 313 Q369.563 311.47 370.328 311.47 H372.47 Z" stroke="#3f4a5c" stroke-width="0.7" fill="none"/><path d="M372.12 384.688 Q372.12 383.748 374 383.748 Q375.88 383.748 375.88 384.688 V387.32 H378.512 Q379.452 387.32 379.452 389.2 Q379.452 391.08 378.512 391.08 H375.88 V393.712 Q375.88 394.652 374 394.652 Q372.12 394.652 372.12 393.712 V391.08 H369.488 Q368.548 391.08 368.548 389.2 Q368.548 387.32 369.488 387.32 H372.12 Z" stroke="#3f4a5c" stroke-width="0.7" fill="none"/><path d="M372.15 470.36 Q372.15 469.435 374 469.435 Q375.85 469.435 375.85 470.36 V472.95 H378.44 Q379.365 472.95 379.365 474.8 Q379.365 476.65000000000003 378.44 476.65000000000003 H375.85 V479.24 Q375.85 480.165 374 480.165 Q372.15 480.165 372.15 479.24 V476.65000000000003 H369.56 Q368.635 476.65000000000003 368.635 474.8 Q368.635 472.95 369.56 472.95 H372.15 Z" stroke="#3f4a5c" stroke-width="0.7" fill="none"/><path d="M421.84999999999997 638.06 Q421.84999999999997 637.135 423.7 637.135 Q425.55 637.135 425.55 638.06 V640.65 H428.14 Q429.065 640.65 429.065 642.5 Q429.065 644.35 428.14 644.35 H425.55 V646.94 Q425.55 647.865 423.7 647.865 Q421.84999999999997 647.865 421.84999999999997 646.94 V644.35 H419.26 Q418.335 644.35 418.335 642.5 Q418.335 640.65 419.26 640.65 H421.84999999999997 Z" stroke="#3f4a5c" stroke-width="0.7" fill="none"/><path d="M421.9 722.18 Q421.9 721.28 423.7 721.28 Q425.5 721.28 425.5 722.18 V724.7 H428.02000000000004 Q428.92 724.7 428.92 726.5 Q428.92 728.3 428.02000000000004 728.3 H425.5 V730.82 Q425.5 731.72 423.7 731.72 Q421.9 731.72 421.9 730.82 V728.3 H419.37999999999994 Q418.47999999999996 728.3 418.47999999999996 726.5 Q418.47999999999996 724.7 419.37999999999994 724.7 H421.9 Z" stroke="#3f4a5c" stroke-width="0.7" fill="none"/><path d="M372.0 806.28 Q372.0 805.38 373.8 805.38 Q375.6 805.38 375.6 806.28 V808.8000000000001 H378.12000000000006 Q379.02000000000004 808.8000000000001 379.02000000000004 810.6 Q379.02000000000004 812.4 378.12000000000006 812.4 H375.6 V814.9200000000001 Q375.6 815.82 373.8 815.82 Q372.0 815.82 372.0 814.9200000000001 V812.4 H369.47999999999996 Q368.58 812.4 368.58 810.6 Q368.58 808.8000000000001 369.47999999999996 808.8000000000001 H372.0 Z" stroke="#3f4a5c" stroke-width="0.7" fill="none"/><path d="M471.40000000000003 872.6400000000001 Q471.40000000000003 871.69 473.3 871.69 Q475.2 871.69 475.2 872.6400000000001 V875.3000000000001 H477.86 Q478.81 875.3000000000001 478.81 877.2 Q478.81 879.1 477.86 879.1 H475.2 V881.76 Q475.2 882.71 473.3 882.71 Q471.40000000000003 882.71 471.40000000000003 881.76 V879.1 H468.74 Q467.79 879.1 467.79 877.2 Q467.79 875.3000000000001 468.74 875.3000000000001 H471.40000000000003 Z" stroke="#3f4a5c" stroke-width="0.7" fill="none"/></svg>
<div class="b" style="left:48px;top:899px;width:655.4px;height:1px;background:#e5e7eb"></div>
<div class="b" style="left:704.4px;top:137px;width:735.6px;height:763px;background:#fff"></div>
<svg class="s" style="left:723px;top:148.5px;" width="19" height="19" viewBox="0 0 19 19"><rect width="19" height="19" rx="1.5" fill="#3d7bc8"/></svg>
<div class="t" style="left:726.5px;top:154.93px;font-size:11.6px;line-height:14.5px;color:#fff;font-weight:bold;letter-spacing:-0.3px">TS</div>
<svg class="s" style="left:732.8px;top:143.38px" width="15.6" height="13.65" viewBox="0 0 16 14"><path d="M1.8 9.2 C1.2 6 3.6 2.4 7.3 1.5 Q8 1.2 8.7 1.5 C12.4 2.4 14.8 6 14.2 9.2 C13.6 12.2 11 13 8 13 C5 13 2.4 12.2 1.8 9.2Z" fill="#fff" stroke="#fff" stroke-width="2.6" stroke-linejoin="round"/><path d="M1.8 9.2 C1.2 6 3.6 2.4 7.3 1.5 Q8 1.2 8.7 1.5 C12.4 2.4 14.8 6 14.2 9.2 C13.6 12.2 11 13 8 13 C5 13 2.4 12.2 1.8 9.2Z" fill="#f4ead6" stroke="#1f1f1f" stroke-width="0.95" stroke-linejoin="round"/><path d="M6 3.3 Q7 2.6 8 3 M8.4 2.9 Q9.5 2.7 10.3 3.4 M6.8 4.3 Q8 3.6 9.4 4.2" stroke="#c9b99a" stroke-width="0.35" fill="none"/><circle cx="5.6" cy="7.6" r="0.95" fill="#111"/><circle cx="10.4" cy="7.6" r="0.95" fill="#111"/><circle cx="5.85" cy="7.3" r="0.3" fill="#fff"/><circle cx="10.65" cy="7.3" r="0.3" fill="#fff"/><path d="M7.1 8.7 Q8 8.9 8.9 8.7 Q8.6 10.2 8 10.2 Q7.4 10.2 7.1 8.7Z" fill="#8b1a1a"/><ellipse cx="4.2" cy="9" rx="1.05" ry="0.65" fill="#f2a7b5"/><ellipse cx="11.8" cy="9" rx="1.05" ry="0.65" fill="#f2a7b5"/></svg>
<div class="b" style="left:752.8px;top:141.4px;width:288.8px;height:33px;background:#f9fafb;border:1px solid #d1d5db;border-radius:6px;box-shadow:0 1px 2px rgba(0,0,0,0.04)"></div>
<div class="t" style="left:762px;top:149.11px;font-size:14.91px;line-height:18.64px;color:#1f2937;width:271.5px;overflow:hidden">A new Slack post with a given word in a given channel</div>
<div class="b" style="left:1058.3px;top:141.2px;width:31.4px;height:33.5px;background:#dfe9fa;border:1px solid #93c5fd;border-radius:6px"></div>
<div class="b" style="left:1068.3px;top:152.1px;width:11.4px;height:11.6px;border:1.15px solid #1e40af;border-radius:2px"></div>
<div class="t" style="left:1102px;top:150.84px;font-size:11.8px;line-height:14.75px;color:#4b5563;">tag</div>
<div class="b" style="left:1123.6px;top:141.7px;width:137.8px;height:32.7px;background:#fff;border:1px solid #d1d5db;border-radius:6px;box-shadow:0 1px 2px rgba(0,0,0,0.05)"></div>
<svg class="s" style="left:1235.3px;top:151.3px" width="14" height="14" viewBox="0 0 24 24" fill="none" stroke="#4b5563" stroke-width="1.8" stroke-linecap="round" stroke-linejoin="round"><path d="m6 9 6 6 6-6"/></svg>
<svg class="s" style="left:1279.25px;top:151.55px" width="13.5" height="13.5" viewBox="0 0 24 24" fill="none" stroke="#1f2937" stroke-width="1.9" stroke-linecap="round" stroke-linejoin="round"><path d="M15.2 3a2 2 0 0 1 1.4.6l3.8 3.8a2 2 0 0 1 .6 1.4V19a2 2 0 0 1-2 2H5a2 2 0 0 1-2-2V5a2 2 0 0 1 2-2z"/><path d="M17 21v-7a1 1 0 0 0-1-1H8a1 1 0 0 0-1 1v7"/><path d="M7 3v4a1 1 0 0 0 1 1h7"/></svg>
<div class="t" style="left:1302px;top:150.47px;font-size:12.18px;line-height:15.22px;color:#1f2937;font-weight:bold;">Save to workspace</div>
<div class="b" style="left:718.5px;top:192px;width:8px;height:8px;background:#9ee6ae;border-radius:50%"></div>
<svg class="s" style="left:747.4px;top:189px" width="14" height="14" viewBox="0 0 24 24" fill="none" stroke="#4b5563" stroke-width="2" stroke-linecap="round" stroke-linejoin="round"><line x1="12" x2="12" y1="2" y2="22"/><path d="M17 5H9.5a3.5 3.5 0 0 0 0 7h5a3.5 3.5 0 0 1 0 7H6"/></svg>
<svg class="s" style="left:789.4px;top:189px" width="14" height="14" viewBox="0 0 24 24" fill="none" stroke="#4b5563" stroke-width="2" stroke-linecap="round" stroke-linejoin="round"><line x1="12" x2="12" y1="2" y2="22"/><path d="M17 5H9.5a3.5 3.5 0 0 0 0 7h5a3.5 3.5 0 0 1 0 7H6"/></svg>
<svg class="s" style="left:831.4px;top:189px" width="14" height="14" viewBox="0 0 24 24" fill="none" stroke="#4b5563" stroke-width="2" stroke-linecap="round" stroke-linejoin="round"><path d="M11 21.73a2 2 0 0 0 2 0l7-4A2 2 0 0 0 21 16V8a2 2 0 0 0-1-1.73l-7-4a2 2 0 0 0-2 0l-7 4A2 2 0 0 0 3 8v8a2 2 0 0 0 1 1.73z"/><path d="M12 22V12"/><path d="m3.3 7 8.7 5 8.7-5"/><path d="m7.5 4.27 9 5.15"/></svg>
<svg class="s" style="left:873.5px;top:189px" width="14" height="14" viewBox="0 0 24 24" fill="none" stroke="#4b5563" stroke-width="2" stroke-linecap="round" stroke-linejoin="round"><path d="M11 21.73a2 2 0 0 0 2 0l7-4A2 2 0 0 0 21 16V8a2 2 0 0 0-1-1.73l-7-4a2 2 0 0 0-2 0l-7 4A2 2 0 0 0 3 8v8a2 2 0 0 0 1 1.73z"/><path d="M12 22V12"/><path d="m3.3 7 8.7 5 8.7-5"/><path d="m7.5 4.27 9 5.15"/></svg>
<svg class="s" style="left:915.6px;top:189px" width="14" height="14" viewBox="0 0 24 24" fill="none" stroke="#4b5563" stroke-width="2" stroke-linecap="round" stroke-linejoin="round"><path d="M21 12a9 9 0 1 1-9-9c2.52 0 4.93 1 6.74 2.74L21 8"/><path d="M21 3v5h-5"/></svg>
<svg class="s" style="left:999.6px;top:189px" width="14" height="14" viewBox="0 0 24 24" fill="none" stroke="#4b5563" stroke-width="2" stroke-linecap="round" stroke-linejoin="round"><path d="M12.22 2h-.44a2 2 0 0 0-2 2v.18a2 2 0 0 1-1 1.73l-.43.25a2 2 0 0 1-2 0l-.15-.08a2 2 0 0 0-2.73.73l-.22.38a2 2 0 0 0 .73 2.73l.15.1a2 2 0 0 1 1 1.72v.51a2 2 0 0 1-1 1.74l-.15.09a2 2 0 0 0-.73 2.73l.22.38a2 2 0 0 0 2.73.73l.15-.08a2 2 0 0 1 2 0l.43.25a2 2 0 0 1 1 1.73V20a2 2 0 0 0 2 2h.44a2 2 0 0 0 2-2v-.18a2 2 0 0 1 1-1.73l.43-.25a2 2 0 0 1 2 0l.15.08a2 2 0 0 0 2.73-.73l.22-.39a2 2 0 0 0-.73-2.73l-.15-.08a2 2 0 0 1-1-1.74v-.5a2 2 0 0 1 1-1.74l.15-.09a2 2 0 0 0 .73-2.73l-.22-.38a2 2 0 0 0-2.73-.73l-.15.08a2 2 0 0 1-2 0l-.43-.25a2 2 0 0 1-1-1.73V4a2 2 0 0 0-2-2z"/><circle cx="12" cy="12" r="3"/></svg>
<svg class="s" style="left:957.3px;top:189px" width="14" height="14" viewBox="0 0 24 24" fill="none" stroke="#5b21b6" stroke-width="2" stroke-linecap="round" stroke-linejoin="round"><path d="m21.64 3.64-1.28-1.28a1.21 1.21 0 0 0-1.72 0L2.36 18.64a1.21 1.21 0 0 0 0 1.72l1.28 1.28a1.2 1.2 0 0 0 1.72 0L21.64 5.36a1.2 1.2 0 0 0 0-1.72"/><path d="m14 7 3 3"/><path d="M5 6v4"/><path d="M19 14v4"/><path d="M10 2v2"/><path d="M7 8H3"/><path d="M21 16h-4"/><path d="M11 3H9"/></svg>
<svg class="s" style="left:1406.8px;top:188.7px" width="14" height="14" viewBox="0 0 24 24" fill="none" stroke="#4b5563" stroke-width="1.9" stroke-linecap="round" stroke-linejoin="round"><path d="m16 6 4 14"/><path d="M12 6v14"/><path d="M8 8v12"/><path d="M4 4v16"/></svg>
<div class="b" style="left:704.4px;top:213px;width:735.6px;height:2px;background:#e4e6ea"></div>
<div class="b" style="left:704.4px;top:215px;width:69.1px;height:501px;background:#f8f9fb"></div>
<div class="b" style="left:773.5px;top:215px;width:652.4px;height:501px;background:#fffffe"></div>
<div class="b" style="left:773.5px;top:215.2px;width:652.4px;height:20.8px;border:2px solid #eeeeee;border-right:none"></div>
<div class="b" style="left:0;top:0;width:1440px;height:716px;overflow:hidden"><div class="t" style="left:774.6px;top:217.52px;font-size:14px;line-height:17.5px;color:#1f2937;font-family:'Liberation Mono',monospace;white-space:pre;-webkit-text-stroke:0.15px currentColor"><span style="color:#0000ff">import</span><span style="color:#000000"> </span><span style="color:#0431fa">{</span><span style="color:#000000"> </span><span style="color:#267f99">WebClient</span><span style="color:#000000"> </span><span style="color:#0431fa">}</span><span style="color:#000000"> </span><span style="color:#0000ff">from</span><span style="color:#000000"> </span><span style="color:#a31515">'@slack/web-api'</span><span style="color:#000000">;</span></div><div class="t" style="left:735px;top:217.52px;font-size:14px;line-height:17.5px;color:#0b216f;font-family:'Liberation Mono',monospace;width:7.2px;text-align:right;direction:rtl">1</div><div class="t" style="left:774.6px;top:238.52px;font-size:14px;line-height:17.5px;color:#1f2937;font-family:'Liberation Mono',monospace;white-space:pre;-webkit-text-stroke:0.15px currentColor"><span style="color:#0000ff">import</span><span style="color:#000000"> </span><span style="color:#0431fa">{</span><span style="color:#000000"> getState, setState </span><span style="color:#0431fa">}</span><span style="color:#000000"> </span><span style="color:#0000ff">from</span><span style="color:#000000"> </span><span style="color:#a31515">'windmill-client@1'</span><span style="color:#000000">;</span></div><div class="t" style="left:735px;top:238.52px;font-size:14px;line-height:17.5px;color:#999999;font-family:'Liberation Mono',monospace;width:7.2px;text-align:right;direction:rtl">2</div><div class="t" style="left:774.6px;top:259.52px;font-size:14px;line-height:17.5px;color:#1f2937;font-family:'Liberation Mono',monospace;white-space:pre;-webkit-text-stroke:0.15px currentColor"></div><div class="t" style="left:735px;top:259.52px;font-size:14px;line-height:17.5px;color:#999999;font-family:'Liberation Mono',monospace;width:7.2px;text-align:right;direction:rtl">3</div><div class="t" style="left:774.6px;top:280.52px;font-size:14px;line-height:17.5px;color:#1f2937;font-family:'Liberation Mono',monospace;white-space:pre;-webkit-text-stroke:0.15px currentColor"><span style="color:#0000ff">type</span><span style="color:#000000"> </span><span style="color:#267f99">Slack</span><span style="color:#000000"> = </span><span style="color:#0431fa">{</span></div><div class="t" style="left:735px;top:280.52px;font-size:14px;line-height:17.5px;color:#999999;font-family:'Liberation Mono',monospace;width:7.2px;text-align:right;direction:rtl">4</div><div class="t" style="left:774.6px;top:301.52px;font-size:14px;line-height:17.5px;color:#1f2937;font-family:'Liberation Mono',monospace;white-space:pre;-webkit-text-stroke:0.15px currentColor"><span style="color:#000000">  token: </span><span style="color:#0000ff">string</span></div><div class="t" style="left:735px;top:301.52px;font-size:14px;line-height:17.5px;color:#999999;font-family:'Liberation Mono',monospace;width:7.2px;text-align:right;direction:rtl">5</div><div class="t" style="left:774.6px;top:322.52px;font-size:14px;line-height:17.5px;color:#1f2937;font-family:'Liberation Mono',monospace;white-space:pre;-webkit-text-stroke:0.15px currentColor"><span style="color:#0431fa">}</span></div><div class="t" style="left:735px;top:322.52px;font-size:14px;line-height:17.5px;color:#999999;font-family:'Liberation Mono',monospace;width:7.2px;text-align:right;direction:rtl">6</div><div class="t" style="left:774.6px;top:343.52px;font-size:14px;line-height:17.5px;color:#1f2937;font-family:'Liberation Mono',monospace;white-space:pre;-webkit-text-stroke:0.15px currentColor"></div><div class="t" style="left:735px;top:343.52px;font-size:14px;line-height:17.5px;color:#999999;font-family:'Liberation Mono',monospace;width:7.2px;text-align:right;direction:rtl">7</div><div class="t" style="left:774.6px;top:364.52px;font-size:14px;line-height:17.5px;color:#1f2937;font-family:'Liberation Mono',monospace;white-space:pre;-webkit-text-stroke:0.15px currentColor"><span style="color:#0000ff">export</span><span style="color:#000000"> </span><span style="color:#0000ff">async</span><span style="color:#000000"> </span><span style="color:#0000ff">function</span><span style="color:#000000"> main</span><span style="color:#0431fa">(</span><span style="color:#000000">slack_resource: </span><span style="color:#267f99">Slack</span><span style="color:#000000">, channel: </span><span style="color:#0000ff">string</span><span style="color:#000000">, keyword: </span><span style="color:#0000ff">string</span><span style="color:#000000">) </span></div><div class="t" style="left:735px;top:364.52px;font-size:14px;line-height:17.5px;color:#999999;font-family:'Liberation Mono',monospace;width:7.2px;text-align:right;direction:rtl">8</div><div class="t" style="left:774.6px;top:385.52px;font-size:14px;line-height:17.5px;color:#1f2937;font-family:'Liberation Mono',monospace;white-space:pre;-webkit-text-stroke:0.15px currentColor"><span style="color:#000000">  </span><span style="color:#0000ff">const</span><span style="color:#000000"> web = </span><span style="color:#0000ff">new</span><span style="color:#000000"> </span><span style="color:#267f99">WebClient</span><span style="color:#319331">(</span><span style="color:#000000">slack_resource.token</span><span style="color:#319331">)</span><span style="color:#000000">;</span></div><div class="t" style="left:735px;top:385.52px;font-size:14px;line-height:17.5px;color:#999999;font-family:'Liberation Mono',monospace;width:7.2px;text-align:right;direction:rtl">9</div><div class="t" style="left:774.6px;top:406.52px;font-size:14px;line-height:17.5px;color:#1f2937;font-family:'Liberation Mono',monospace;white-space:pre;-webkit-text-stroke:0.15px currentColor"></div><div class="t" style="left:735px;top:406.52px;font-size:14px;line-height:17.5px;color:#999999;font-family:'Liberation Mono',monospace;width:7.2px;text-align:right;direction:rtl">10</div><div class="t" style="left:774.6px;top:427.52px;font-size:14px;line-height:17.5px;color:#1f2937;font-family:'Liberation Mono',monospace;white-space:pre;-webkit-text-stroke:0.15px currentColor"><span style="color:#2a8a2a">  // Get the last state</span></div><div class="t" style="left:735px;top:427.52px;font-size:14px;line-height:17.5px;color:#999999;font-family:'Liberation Mono',monospace;width:7.2px;text-align:right;direction:rtl">11</div><div class="t" style="left:774.6px;top:448.52px;font-size:14px;line-height:17.5px;color:#1f2937;font-family:'Liberation Mono',monospace;white-space:pre;-webkit-text-stroke:0.15px currentColor"><span style="color:#000000">  </span><span style="color:#0000ff">const</span><span style="color:#000000"> lastState: </span><span style="color:#0000ff">any</span><span style="color:#000000"> = </span><span style="color:#0000ff">await</span><span style="color:#000000"> getState</span><span style="color:#319331">()</span><span style="color:#000000">;</span></div><div class="t" style="left:735px;top:448.52px;font-size:14px;line-height:17.5px;color:#999999;font-family:'Liberation Mono',monospace;width:7.2px;text-align:right;direction:rtl">12</div><div class="t" style="left:774.6px;top:469.52px;font-size:14px;line-height:17.5px;color:#1f2937;font-family:'Liberation Mono',monospace;white-space:pre;-webkit-text-stroke:0.15px currentColor"></div><div class="t" style="left:735px;top:469.52px;font-size:14px;line-height:17.5px;color:#999999;font-family:'Liberation Mono',monospace;width:7.2px;text-align:right;direction:rtl">13</div><div class="t" style="left:774.6px;top:490.52px;font-size:14px;line-height:17.5px;color:#1f2937;font-family:'Liberation Mono',monospace;white-space:pre;-webkit-text-stroke:0.15px currentColor"><span style="color:#2a8a2a">  // Get the list of messages in the channel</span></div><div class="t" style="left:735px;top:490.52px;font-size:14px;line-height:17.5px;color:#999999;font-family:'Liberation Mono',monospace;width:7.2px;text-align:right;direction:rtl">14</div><div class="t" style="left:774.6px;top:511.52px;font-size:14px;line-height:17.5px;color:#1f2937;font-family:'Liberation Mono',monospace;white-space:pre;-webkit-text-stroke:0.15px currentColor"><span style="color:#000000">  </span><span style="color:#0000ff">const</span><span style="color:#000000"> result = </span><span style="color:#0000ff">await</span><span style="color:#000000"> web.conversations.history</span><span style="color:#319331">(</span><span style="color:#7b3814">{</span></div><div class="t" style="left:735px;top:511.52px;font-size:14px;line-height:17.5px;color:#999999;font-family:'Liberation Mono',monospace;width:7.2px;text-align:right;direction:rtl">15</div><div class="t" style="left:774.6px;top:532.52px;font-size:14px;line-height:17.5px;color:#1f2937;font-family:'Liberation Mono',monospace;white-space:pre;-webkit-text-stroke:0.15px currentColor"><span style="color:#000000">    channel: channel</span></div><div class="t" style="left:735px;top:532.52px;font-size:14px;line-height:17.5px;color:#999999;font-family:'Liberation Mono',monospace;width:7.2px;text-align:right;direction:rtl">16</div><div class="t" style="left:774.6px;top:553.52px;font-size:14px;line-height:17.5px;color:#1f2937;font-family:'Liberation Mono',monospace;white-space:pre;-webkit-text-stroke:0.15px currentColor"><span style="color:#000000">  </span><span style="color:#7b3814">}</span><span style="color:#319331">)</span><span style="color:#000000">;</span></div><div class="t" style="left:735px;top:553.52px;font-size:14px;line-height:17.5px;color:#999999;font-family:'Liberation Mono',monospace;width:7.2px;text-align:right;direction:rtl">17</div><div class="t" style="left:774.6px;top:574.52px;font-size:14px;line-height:17.5px;color:#1f2937;font-family:'Liberation Mono',monospace;white-space:pre;-webkit-text-stroke:0.15px currentColor"></div><div class="t" style="left:735px;top:574.52px;font-size:14px;line-height:17.5px;color:#999999;font-family:'Liberation Mono',monospace;width:7.2px;text-align:right;direction:rtl">18</div><div class="t" style="left:774.6px;top:595.52px;font-size:14px;line-height:17.5px;color:#1f2937;font-family:'Liberation Mono',monospace;white-space:pre;-webkit-text-stroke:0.15px currentColor"><span style="color:#2a8a2a">  // Filter the messages to only include new ones with the given keyword</span></div><div class="t" style="left:735px;top:595.52px;font-size:14px;line-height:17.5px;color:#999999;font-family:'Liberation Mono',monospace;width:7.2px;text-align:right;direction:rtl">19</div><div class="t" style="left:774.6px;top:616.52px;font-size:14px;line-height:17.5px;color:#1f2937;font-family:'Liberation Mono',monospace;white-space:pre;-webkit-text-stroke:0.15px currentColor"><span style="color:#000000">  </span><span style="color:#0000ff">const</span><span style="color:#000000"> newMessages = result.messages.filter</span><span style="color:#319331">(</span><span style="color:#7b3814">(</span><span style="color:#000000">message: </span><span style="color:#0000ff">any</span><span style="color:#7b3814">)</span><span style="color:#000000"> =&gt; </span><span style="color:#7b3814">{</span></div><div class="t" style="left:735px;top:616.52px;font-size:14px;line-height:17.5px;color:#999999;font-family:'Liberation Mono',monospace;width:7.2px;text-align:right;direction:rtl">20</div><div class="t" style="left:774.6px;top:637.52px;font-size:14px;line-height:17.5px;color:#1f2937;font-family:'Liberation Mono',monospace;white-space:pre;-webkit-text-stroke:0.15px currentColor"><span style="color:#000000">    </span><span style="color:#0000ff">return</span><span style="color:#000000"> message.text.includes</span><span style="color:#0431fa">(</span><span style="color:#000000">keyword</span><span style="color:#0431fa">)</span><span style="color:#000000"> &amp;&amp; </span><span style="color:#0431fa">(</span><span style="color:#000000">!lastState || message.ts &gt; lastState.ts</span><span style="color:#0431fa">)</span><span style="color:#000000">;</span></div><div class="t" style="left:735px;top:637.52px;font-size:14px;line-height:17.5px;color:#999999;font-family:'Liberation Mono',monospace;width:7.2px;text-align:right;direction:rtl">21</div><div class="t" style="left:774.6px;top:658.52px;font-size:14px;line-height:17.5px;color:#1f2937;font-family:'Liberation Mono',monospace;white-space:pre;-webkit-text-stroke:0.15px currentColor"><span style="color:#000000">  </span><span style="color:#7b3814">}</span><span style="color:#319331">)</span><span style="color:#000000">;</span></div><div class="t" style="left:735px;top:658.52px;font-size:14px;line-height:17.5px;color:#999999;font-family:'Liberation Mono',monospace;width:7.2px;text-align:right;direction:rtl">22</div><div class="t" style="left:774.6px;top:679.52px;font-size:14px;line-height:17.5px;color:#1f2937;font-family:'Liberation Mono',monospace;white-space:pre;-webkit-text-stroke:0.15px currentColor"></div><div class="t" style="left:735px;top:679.52px;font-size:14px;line-height:17.5px;color:#999999;font-family:'Liberation Mono',monospace;width:7.2px;text-align:right;direction:rtl">23</div><div class="t" style="left:774.6px;top:700.52px;font-size:14px;line-height:17.5px;color:#1f2937;font-family:'Liberation Mono',monospace;white-space:pre;-webkit-text-stroke:0.15px currentColor"><span style="color:#2a8a2a">  // Update the state with the timestamp of the latest message</span></div><div class="t" style="left:735px;top:700.52px;font-size:14px;line-height:17.5px;color:#999999;font-family:'Liberation Mono',monospace;width:7.2px;text-align:right;direction:rtl">24</div></div>
<div class="b" style="left:774.2px;top:299px;width:1px;height:21px;background:#d3d3d3"></div>
<div class="b" style="left:774.2px;top:383px;width:1px;height:315px;background:#d3d3d3"></div>
<div class="b" style="left:791px;top:530px;width:1px;height:21px;background:#d3d3d3"></div>
<div class="b" style="left:791px;top:635px;width:1px;height:21px;background:#d3d3d3"></div>
<svg class="s" style="left:958.3px;top:632.3px;" width="126" height="2.6" viewBox="0 0 126 2.6"><path d="M0 0.3 L1.60 2.00 L3.20 0.30 L4.80 2.00 L6.40 0.30 L8.00 2.00 L9.60 0.30 L11.20 2.00 L12.80 0.30 L14.40 2.00 L16.00 0.30 L17.60 2.00 L19.20 0.30 L20.80 2.00 L22.40 0.30 L24.00 2.00 L25.60 0.30 L27.20 2.00 L28.80 0.30 L30.40 2.00 L32.00 0.30 L33.60 2.00 L35.20 0.30 L36.80 2.00 L38.40 0.30 L40.00 2.00 L41.60 0.30 L43.20 2.00 L44.80 0.30 L46.40 2.00 L48.00 0.30 L49.60 2.00 L51.20 0.30 L52.80 2.00 L54.40 0.30 L56.00 2.00 L57.60 0.30 L59.20 2.00 L60.80 0.30 L62.40 2.00 L64.00 0.30 L65.60 2.00 L67.20 0.30 L68.80 2.00 L70.40 0.30 L72.00 2.00 L73.60 0.30 L75.20 2.00 L76.80 0.30 L78.40 2.00 L80.00 0.30 L81.60 2.00 L83.20 0.30 L84.80 2.00 L86.40 0.30 L88.00 2.00 L89.60 0.30 L91.20 2.00 L92.80 0.30 L94.40 2.00 L96.00 0.30 L97.60 2.00 L99.20 0.30 L100.80 2.00 L102.40 0.30 L104.00 2.00 L105.60 0.30 L107.20 2.00 L108.80 0.30 L110.40 2.00 L112.00 0.30 L113.60 2.00 L115.20 0.30 L116.80 2.00 L118.40 0.30 L120.00 2.00 L121.60 0.30 L123.20 2.00 L124.80 0.30" stroke="#e51400" stroke-width="0.75" fill="none"/></svg>
<div class="b" style="left:1425.9px;top:215px;width:0.6px;height:501px;background:#e3e3e3"></div>
<div class="b" style="left:1426.5px;top:215px;width:13.5px;height:377.7px;background:rgba(100,100,100,0.4)"></div>
<div class="b" style="left:1426.5px;top:215px;width:13.5px;height:1.8px;background:#3c3c3c"></div>
<div class="b" style="left:1432.5px;top:516.3px;width:7.5px;height:15.6px;background:#c36b63"></div>
<div class="b" style="left:773.8px;top:704.3px;width:486.7px;height:11.3px;background:rgba(100,100,100,0.4)"></div>
<div class="b" style="left:704.4px;top:716px;width:735.6px;height:1px;background:#e5e7eb"></div>
<div class="t" style="left:721px;top:721.72px;font-size:14.7px;line-height:18.38px;color:#4b5563;">Step Input</div>
<div class="t" style="left:820.6px;top:721.51px;font-size:14.91px;line-height:18.64px;color:#4b5563;">Test this step</div>
<div class="t" style="left:940.6px;top:721.58px;font-size:14.84px;line-height:18.55px;color:#4b5563;">Advanced</div>
<div class="b" style="left:704.4px;top:746.8px;width:735.6px;height:1px;background:#e5e7eb"></div>
<div class="b" style="left:704.4px;top:745px;width:99.6px;height:2px;background:#3d4a60"></div>
<div class="b" style="left:1033px;top:750px;width:103px;height:29.6px;background:#f9fafb;border-radius:6px"></div>
<svg class="s" style="left:1046px;top:758.5px" width="13" height="13" viewBox="0 0 24 24" fill="none" stroke="#6b7280" stroke-width="2" stroke-linecap="round" stroke-linejoin="round"><path d="m21.64 3.64-1.28-1.28a1.21 1.21 0 0 0-1.72 0L2.36 18.64a1.21 1.21 0 0 0 0 1.72l1.28 1.28a1.2 1.2 0 0 0 1.72 0L21.64 5.36a1.2 1.2 0 0 0 0-1.72"/><path d="m14 7 3 3"/><path d="M5 6v4"/><path d="M19 14v4"/><path d="M10 2v2"/><path d="M7 8H3"/><path d="M21 16h-4"/><path d="M11 3H9"/></svg>
<div class="t" style="left:1069px;top:758.08px;font-size:11.65px;line-height:14.56px;color:#64748b;font-weight:bold;">Fill inputs</div>
<div class="b" style="left:1138.7px;top:748px;width:4.8px;height:53.5px;background:#a4a8ae;border-radius:3px"></div>
<div class="b" style="left:1143.6px;top:747.5px;width:1px;height:150px;background:#e5e7eb"></div>
<div class="t" style="left:736.8px;top:798.06px;font-size:15.89px;line-height:19.86px;color:#1f2937;font-weight:bold;">slack_resource</div>
<div class="t" style="left:853.2px;top:798.93px;font-size:15px;line-height:18.75px;color:#ef4444;font-weight:bold;">*</div>
<div class="t" style="left:868.6px;top:800.61px;font-size:13.27px;line-height:16.59px;color:#4b5563;font-style:italic;">object</div>
<div class="b" style="left:940px;top:797px;width:40px;height:30px;background:#ede9fe;border-radius:6px"></div>
<svg class="s" style="left:953.25px;top:805.25px" width="13.5" height="13.5" viewBox="0 0 24 24" fill="none" stroke="#5b21b6" stroke-width="2" stroke-linecap="round" stroke-linejoin="round"><path d="m21.64 3.64-1.28-1.28a1.21 1.21 0 0 0-1.72 0L2.36 18.64a1.21 1.21 0 0 0 0 1.72l1.28 1.28a1.2 1.2 0 0 0 1.72 0L21.64 5.36a1.2 1.2 0 0 0 0-1.72"/><path d="m14 7 3 3"/><path d="M5 6v4"/><path d="M19 14v4"/><path d="M10 2v2"/><path d="M7 8H3"/><path d="M21 16h-4"/><path d="M11 3H9"/></svg>
<div class="b" style="left:988px;top:796px;width:76.8px;height:31.7px;background:#f3f4f6;border-radius:7px"></div>
<div class="t" style="left:996px;top:805.25px;font-size:11.27px;line-height:14.09px;color:#1f2937;font-weight:bold;">Static</div>
<div class="b" style="left:1037px;top:798px;width:26px;height:28px;background:#fff;border-radius:6px;box-shadow:0 1px 3px rgba(0,0,0,0.15)"></div>
<svg class="s" style="left:1043.5px;top:805.5px" width="13" height="13" viewBox="0 0 24 24" fill="none" stroke="#3b82f6" stroke-width="1.9" stroke-linecap="round" stroke-linejoin="round"><rect width="18" height="18" x="3" y="3" rx="2" ry="2"/><path d="M9 17c2 0 2.8-1 2.8-2.8V10c0-2 1-3.3 3.2-3"/><path d="M9 11.2h5.7"/></svg>
<div class="b" style="left:1075px;top:799px;width:53px;height:25.6px;background:#fff;border:1px solid #e5e7eb;border-radius:6px"></div>
<svg class="s" style="left:1084.1px;top:804px" width="15.8" height="15.8" viewBox="0 0 24 24" fill="none" stroke="#1f2937" stroke-width="1.9" stroke-linecap="round" stroke-linejoin="round"><path d="M12 22v-5"/><path d="M9 8V2"/><path d="M15 8V2"/><path d="M18 8v5a4 4 0 0 1-4 4h-4a4 4 0 0 1-4-4V8Z"/></svg>
<svg class="s" style="left:1107px;top:805.1px" width="13.6" height="13.6" viewBox="0 0 24 24" fill="none" stroke="#1f2937" stroke-width="2.1" stroke-linecap="round" stroke-linejoin="round"><path d="M5 12h14"/><path d="m12 5 7 7-7 7"/></svg>
<div class="b" style="left:728.8px;top:840.5px;width:401.2px;height:22.2px;background:#fffffe;border:1px solid #e2e4e8"></div>
<div class="b" style="left:729.8px;top:841.5px;width:53px;height:20.2px;background:#f8f9fb"></div>
<div class="b" style="left:783.5px;top:842.2px;width:332.5px;height:19px;border:1.5px solid #eeeeee;border-right:none"></div>
<div class="b" style="left:1116px;top:841.5px;width:0.8px;height:20.2px;background:#e3e3e3"></div>
<div class="b" style="left:1116.5px;top:841.5px;width:13px;height:2px;background:#3c3c3c"></div>
<div class="t" style="left:760px;top:842.82px;font-size:14px;line-height:17.5px;color:#0b216f;font-family:'Liberation Mono',monospace;">1</div>
<div class="t" style="left:783.7px;top:842.82px;font-size:14px;line-height:17.5px;color:#000;font-family:'Liberation Mono',monospace;-webkit-text-stroke:0.15px currentColor">flow_input.slack_resource</div>
<div class="t" style="left:1071.8px;top:871.46px;font-size:12.09px;line-height:15.11px;color:#1f2937;font-weight:bold;">Help</div>
<svg class="s" style="left:1109px;top:873px" width="11" height="11" viewBox="0 0 24 24" fill="none" stroke="#1f2937" stroke-width="2" stroke-linecap="round" stroke-linejoin="round"><path d="m6 9 6 6 6-6"/></svg>
<div class="b" style="left:1155.9px;top:759.5px;width:264.7px;height:33px;background:#f9fafb;border:1px solid #d1d5db;border-radius:6px;box-shadow:0 1px 2px rgba(0,0,0,0.04)"></div>
<div class="t" style="left:1165px;top:766.81px;font-size:14.61px;line-height:18.26px;color:#6b7280;">Search prop...</div>
<div class="b" style="left:1424px;top:801px;width:4.9px;height:34.8px;background:#a4a8ae;border-radius:3px"></div>
<div class="t" style="left:1156px;top:809.58px;font-size:14.74px;line-height:18.43px;color:#374151;">Flow Input</div>
<div class="b" style="left:1156px;top:832px;width:56.4px;height:15.6px;border:1px solid #e5e7eb;border-radius:4px;background:#fff"></div><div class="t" style="left:1161.4px;top:833.69px;font-size:11px;line-height:13.75px;color:#1f2937;font-family:'Liberation Mono',monospace;">channel</div>
<div class="t" style="left:1213.3px;top:832.81px;font-size:11px;line-height:13.75px;color:#1f2937;">:</div>
<div class="t" style="left:1224.6px;top:833.69px;font-size:11px;line-height:13.75px;color:#22a34a;font-weight:bold;font-family:'Liberation Mono',monospace;">""</div>
<div class="b" style="left:1156px;top:853.4px;width:56.4px;height:15.1px;border:1px solid #e5e7eb;border-radius:4px;background:#fff"></div><div class="t" style="left:1161.4px;top:854.69px;font-size:11px;line-height:13.75px;color:#1f2937;font-family:'Liberation Mono',monospace;">keyword</div>
<div class="t" style="left:1213.3px;top:853.81px;font-size:11px;line-height:13.75px;color:#1f2937;">:</div>
<div class="t" style="left:1224.6px;top:854.69px;font-size:11px;line-height:13.75px;color:#22a34a;font-weight:bold;font-family:'Liberation Mono',monospace;">""</div>
<div class="b" style="left:1156px;top:874.5px;width:103px;height:15.1px;border:1px solid #e5e7eb;border-radius:4px;background:#fff"></div><div class="t" style="left:1161.4px;top:875.99px;font-size:11px;line-height:13.75px;color:#1f2937;font-family:'Liberation Mono',monospace;">slack_resource</div>
<div class="t" style="left:1260.2px;top:875.11px;font-size:11px;line-height:13.75px;color:#1f2937;">:</div>
<div class="t" style="left:1271.5px;top:874.72px;font-size:11.41px;line-height:14.26px;color:#4b5563;font-weight:bold;">undefined</div>
<div class="b" style="left:48px;top:88px;width:8px;height:812px;background:linear-gradient(90deg,rgba(0,0,0,0.05),rgba(0,0,0,0))"></div>
</body></html>
